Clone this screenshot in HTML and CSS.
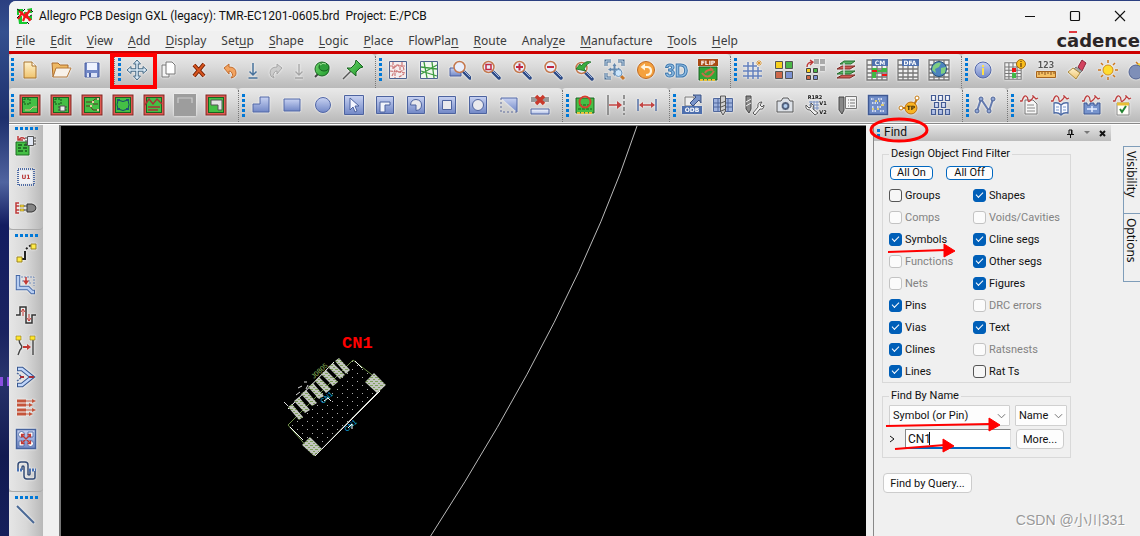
FILE: index.html
```html
<!DOCTYPE html>
<html lang="en">
<head>
<meta charset="utf-8">
<title>Allegro PCB Design GXL</title>
<link rel="stylesheet" href="styles.css">
</head>
<body>
<svg class="defs" aria-hidden="true">
  <defs>
    <linearGradient id="gb" x1="0" y1="0" x2="0" y2="1"><stop offset="0" stop-color="#c9d3f2"/><stop offset="1" stop-color="#7187c6"/></linearGradient>
    <linearGradient id="gl" x1="0" y1="0" x2="0" y2="1"><stop offset="0" stop-color="#fdfdff"/><stop offset="1" stop-color="#a9b9e4"/></linearGradient>
    <linearGradient id="gg" x1="0" y1="0" x2="1" y2="1"><stop offset="0" stop-color="#6fd76d"/><stop offset="1" stop-color="#1f9a2a"/></linearGradient>
    <linearGradient id="gy" x1="0" y1="0" x2="0" y2="1"><stop offset="0" stop-color="#fff3cf"/><stop offset="1" stop-color="#efc36d"/></linearGradient>
    <symbol id="tile" viewBox="0 0 22 22"><rect x="1" y="1" width="20" height="20" fill="#df5a52" stroke="#7c2420"/><rect x="3.500" y="3.500" width="15" height="15" fill="#45bf45" stroke="#1a6420"/></symbol>
    <symbol id="lens" viewBox="0 0 22 22"><path d="M13 13l6 6" stroke="#2c4a86" stroke-width="3.500" stroke-linecap="round"/><path d="M13 12l6 6" stroke="#a9b9dd" stroke-width="1"/><circle cx="8.500" cy="8" r="5.500" fill="#e9eefb" stroke="#c4774c" stroke-width="1.500"/></symbol>
    <symbol id="table" viewBox="0 0 22 22"><rect x="1" y="1" width="20" height="20" fill="#f2f2f2"/><path d="M1 1h20v20H1zM1 6h20M1 10h20M1 14h20M1 18h20M6 1v20M11 1v20M16 1v20" fill="none" stroke="#777" stroke-width="1.300"/></symbol>
    <symbol id="wave" viewBox="0 0 22 22"><path d="M1 7h2q2-6 4-5t2 4 3 0 2-4 3 3l2-1" fill="none" stroke="#bd3c3c" stroke-width="1.300"/></symbol>
  </defs>
</svg>
<div class="desktop">
<main class="window">
  <header class="titlebar">
    <svg class="app-icon" viewBox="0 0 18 18"><path d="M1 2h6v3H3v3H1zM2 9h4v6h5v2H3zM11 2l5-1v5h-3zM12 9h4v4h-3zM8 5h4v3H8z" fill="#17c92f"/><path d="M2 12l4-6 3 4 5-7M3 4l6 5 6 4M7 14l3-7 4 7" stroke="#f01818" stroke-width="2.200" fill="none"/><path d="M1 2l3 2M3 9l-2 2M7 4l2-2M11 15l2 2M15 3l2 2M14 9l2-1" stroke="#111" stroke-width="1"/></svg>
    <h1>Allegro PCB Design GXL (legacy): TMR-EC1201-0605.brd&nbsp; Project: E:/PCB</h1>
    <div class="winctl">
      <button aria-label="Minimize"><svg viewBox="0 0 12 12"><path d="M1 6.500h10" stroke="#111"/></svg></button>
      <button aria-label="Maximize"><svg viewBox="0 0 12 12"><rect x="1.500" y="1.500" width="9" height="9" rx="1" fill="none" stroke="#111" stroke-width="1.200"/></svg></button>
      <button aria-label="Close"><svg viewBox="0 0 12 12"><path d="M1 1l10 10M11 1L1 11" stroke="#111" stroke-width="1.100"/></svg></button>
    </div>
  </header>
  <nav class="menubar">
    <button><u>F</u>ile</button><button><u>E</u>dit</button><button><u>V</u>iew</button><button><u>A</u>dd</button><button><u>D</u>isplay</button><button>Set<u>u</u>p</button><button><u>S</u>hape</button><button><u>L</u>ogic</button><button><u>P</u>lace</button><button>FlowPla<u>n</u></button><button><u>R</u>oute</button><button>Analy<u>z</u>e</button><button><u>M</u>anufacture</button><button><u>T</u>ools</button><button><u>H</u>elp</button>
    <span class="brand">c<span class="macron">a</span>dence</span>
  </nav>

  <div class="toolrow">
    <div class="group first"><i class="grip"></i>
      <button aria-label="New"><svg viewBox="0 0 22 22"><path d="M5 3h8l4 4v12H5z" fill="url(#gy)" stroke="#a8722a"/><path d="M13 3v4h4" fill="#fff" stroke="#a8722a"/></svg></button>
      <button aria-label="Open"><svg viewBox="0 0 22 22"><path d="M2 4h6l2 2h8v4H6l-3 8z" fill="#efb964" stroke="#a8682a"/><path d="M3 18l3-9h15l-4 9z" fill="#f8f2ea" stroke="#b57a3c"/></svg></button>
      <button aria-label="Save"><svg viewBox="0 0 22 22"><path d="M4 4h14v14H4z" fill="#7187c6" stroke="#4b5fa0"/><path d="M6 4h10v7H6z" fill="#eef2ff"/><path d="M6 14h10v4H6z" fill="#dce3f7"/><path d="M8 14h2v4H8z" fill="#4b5fa0"/></svg></button>
    </div>
    <div class="group marked"><i class="grip"></i>
      <button aria-label="Move"><svg viewBox="0 0 22 22"><path d="M11 4v14M4 11h14" stroke="#446884" stroke-width="3.500"/><path d="M11 1l3.500 4h-7zM11 21l3.500-4h-7zM1 11l4-3.500v7zM21 11l-4-3.500v7z" fill="#dcecf8" stroke="#446884"/><path d="M11 4v14M4 11h14" stroke="#dcecf8" stroke-width="1.500"/></svg></button>
      <button aria-label="Copy"><svg viewBox="0 0 22 22"><path d="M5 6h7v12H5z" fill="#f4f4f4" stroke="#777"/><path d="M9 3h6l3 3v9H9z" fill="#fff" stroke="#777"/></svg></button>
      <button aria-label="Delete"><svg viewBox="0 0 22 22"><path d="M6 6l10 11M16 5L6 17" stroke="#702108" stroke-width="4"/><path d="M6 6l10 11M16 5L6 17" stroke="#d6531d" stroke-width="2"/></svg></button>
      <button aria-label="Undo"><svg viewBox="0 0 22 22"><path d="M5 9l5-4v3q7 0 7 6 0 4-5 5 3-3 1-5-1-2-3-2v3z" fill="#f2a461" stroke="#bf6a2d"/></svg></button>
      <button class="half" aria-label="Undo list"><svg viewBox="4 0 14 22"><path d="M11 4v12M7.500 12.500L11 16l3.500-3.500M6.500 19h9" fill="none" stroke="#47719b" stroke-width="1.500"/></svg></button>
      <button aria-label="Redo"><svg viewBox="0 0 22 22"><path d="M17 9l-5-4v3q-7 0-7 6 0 4 4 5-2-3 0-5 1-2 3-2v3z" fill="#ccc" stroke="#a4a4a4"/></svg></button>
      <button class="half" aria-label="Redo list"><svg viewBox="4 0 14 22"><path d="M11 5v11M7.500 12.500L11 16l3.500-3.500M7 19h8" fill="none" stroke="#a4a4a4" stroke-width="1.300"/></svg></button>
      <button aria-label="Unpin"><svg viewBox="0 0 22 22"><path d="M4 18l4-4" stroke="#444" stroke-width="2"/><circle cx="11" cy="10" r="7" fill="url(#gg)" stroke="#17601f"/><ellipse cx="13" cy="8" rx="5" ry="4" fill="#2f9f3b" stroke="#17601f"/><path d="M9 6q3-3 6-1" stroke="#a8e8a0" fill="none"/></svg></button>
      <button aria-label="Pin"><svg viewBox="0 0 22 22"><path d="M1 20l8-8" stroke="#555" stroke-width="1.500"/><path d="M14 1l7 7-3 1-4 4v4L5 9h4l4-4z" fill="url(#gg)" stroke="#17601f"/></svg></button>
      <svg class="mark" aria-hidden="true"><rect x="2" y="2" width="43" height="32" fill="none" stroke="#f00" stroke-width="4"/></svg>
    </div>
    <div class="group"><i class="grip"></i>
      <button aria-label="Unrats all"><svg viewBox="0 0 22 22"><path d="M2.500 2.500h17v17h-17z" fill="#f5eeee" stroke="#4c6290"/><path d="M3 7h16M3 12l16 2M5 17l3-6 4 2 5-2M6 3v7l4-4 6 1 1 4M13 8v5M12 18l5-3M15 3v5M8 14v5" fill="none" stroke="#c77" stroke-width="1.200" stroke-dasharray="3 1"/></svg></button>
      <button aria-label="Rats all"><svg viewBox="0 0 22 22"><path d="M2.500 2.500h17v17h-17z" fill="#f1f8ef" stroke="#4c6290"/><path d="M6 3l3 16M14 3l2 16M3 8l16 2M3 15l16-9M3 12l16 5" fill="none" stroke="#3c9b40" stroke-width="1.300"/></svg></button>
      <button aria-label="Zoom points"><svg viewBox="0 0 22 22"><path d="M1 9h11v8H1z" fill="url(#gb)" stroke="#4b5fa0"/><use href="#lens" x="2"/></svg></button>
      <button aria-label="Zoom fit"><svg viewBox="0 0 22 22"><use href="#lens"/><path d="M6 5.500h5v5H6z" fill="none" stroke="#c22740" stroke-width="1.500"/></svg></button>
      <button aria-label="Zoom in"><svg viewBox="0 0 22 22"><use href="#lens"/><path d="M5 8h7M8.500 4.500v7" stroke="#c22740" stroke-width="2"/></svg></button>
      <button aria-label="Zoom out"><svg viewBox="0 0 22 22"><use href="#lens"/><path d="M5 8h7" stroke="#c22740" stroke-width="2"/></svg></button>
      <button aria-label="Zoom previous"><svg viewBox="0 0 22 22"><use href="#lens" y="1"/><path d="M3 10l4-5 1 2q5-6 10-4-4 1-7 7l2 2z" fill="#39ad3e" stroke="#1b6d24" stroke-width=".8"/></svg></button>
      <button aria-label="Zoom world"><svg viewBox="0 0 22 22"><path d="M2 7V2h5M14 2h5v5M2 14v5h5" fill="none" stroke="#476a90" stroke-width="3"/><path d="M2 7V2h5M14 2h5v5M2 14v5h5" fill="none" stroke="#cfe3f4" stroke-width="1"/><path d="M10.500 4l2 3h-4zM10.500 17l2-3h-4zM4 10.500l3-2v4zM17 10.500l-3-2v4zM9.500 7h2v7h-2zM7 9.500h7v2H7z" fill="#6488ae"/><path d="M17 17l3 3" stroke="#c7762b" stroke-width="3"/><circle cx="14.500" cy="14" r="3.500" fill="#cbe5fb" stroke="#6a95be"/></svg></button>
      <button aria-label="Refresh"><svg viewBox="0 0 22 22"><circle cx="11" cy="11" r="8.500" fill="#f5a13d" stroke="#bd6a25"/><path d="M7 8h5q4 0 4 4t-5 4" fill="none" stroke="#fff4dd" stroke-width="2.200"/><path d="M10 4.500v7L5.500 8z" fill="#fff4dd"/></svg></button>
      <button aria-label="3D"><svg viewBox="0 0 24 22" class="wide"><text x="0" y="18" class="t3d">3D</text></svg></button>
      <button aria-label="Flip"><svg viewBox="0 0 22 24" class="tall"><path d="M1 1h20v7H1z" fill="#a94a14"/><text x="11" y="7" class="tiny light">FLIP</text><path d="M2 9h18v13H2z" fill="#2fa737" stroke="#1b5f20"/><path d="M3 22h16" stroke="#e9c13a" stroke-width="2" stroke-dasharray="3 1"/><path d="M5 15q6 8 12-2M8 15q2-4 8-3l-3-2" fill="none" stroke="#c86e48" stroke-width="2"/></svg></button>
    </div>
    <div class="group"><i class="grip"></i>
      <button aria-label="Grid"><svg viewBox="0 0 22 22"><path d="M6 3v17M11 3v17M16 8v12M1 7h14M1 12h19M1 17h19" stroke="#6380bd" stroke-width="1.500"/><path d="M17 1v6M14 4h6M15 2l4 4M19 2l-4 4" stroke="#d68b1e" stroke-width=".8"/></svg></button>
      <button aria-label="Color"><svg viewBox="0 0 22 22"><g stroke="#555"><path d="M2.500 2.500h7v7h-7z" fill="#f6cf1c"/><path d="M12.500 2.500h7v7h-7z" fill="#4cb648"/><path d="M2.500 12.500h7v7h-7z" fill="#cd6849"/><path d="M12.500 12.500h7v7h-7z" fill="#7c93d2"/></g></svg></button>
      <button aria-label="Shadow toggle"><svg viewBox="0 0 22 22"><path d="M10 0h5v5h-5zM16 0h5v5h-5zM16 7h5v5h-5z" fill="#aaa"/><path d="M3 8q0-5 6-5M6 1l3 2-3 3" stroke="#bd3838" fill="none" stroke-width="1.400"/><g stroke="#444"><path d="M2.500 9.500h4v4h-4z" fill="#f6cf1c"/><path d="M9.500 9.500h4v4h-4z" fill="#4cb648"/><path d="M2.500 16.500h4v4h-4z" fill="#cd6849"/><path d="M9.500 16.500h4v4h-4z" fill="#7c93d2"/></g></svg></button>
      <button aria-label="Cross section"><svg viewBox="0 0 22 22"><path d="M2 19l5-3h13l-5 3z" fill="#cf5b55" stroke="#7b2a25"/><path d="M2 15l5-3h13l-5 3z" fill="#58b263" stroke="#236b2c"/><path d="M2 10l5-3h13l-5 3z" fill="#cf5b55" stroke="#7b2a25"/><path d="M5 5l4-3h11l-4 3z" fill="#58b263" stroke="#236b2c"/><path d="M9 4v12" stroke="#ddd" stroke-width="1.500"/></svg></button>
      <button aria-label="Constraint manager"><svg viewBox="0 0 22 22"><use href="#table"/><path d="M6 9h5v2H6zM11 11h5v2h-5zM6 13h4v6H6zM16 9h5v4h-5z" fill="#40b846"/><path d="M6 11h5v2H6zM16 15h5v2h-5z" fill="#f01414"/><path d="M6 0h16v7H6z" fill="#4e70ae"/><text x="14" y="6" class="tiny light">CM</text></svg></button>
      <button aria-label="DFA"><svg viewBox="0 0 22 22"><use href="#table"/><path d="M5 0h17v7H5z" fill="#4e70ae"/><text x="13" y="6" class="tiny light">DFA</text></svg></button>
      <button aria-label="Web"><svg viewBox="0 0 22 22"><use href="#table"/><circle cx="11" cy="10" r="7.500" fill="#4c83bd" stroke="#24517a"/><path d="M5 7q4-5 8-3l-2 4-4 2 1 4-4-3zM13 9l5-1-1 6-4 1z" fill="#7fcf80"/></svg></button>
    </div>
    <div class="group last"><i class="grip"></i>
      <button aria-label="Show element"><svg viewBox="0 0 22 22"><circle cx="10" cy="11" r="8" fill="url(#gb)" stroke="#5267a8"/><path d="M9 6h2v2H9zM9 9h2v7H9z" fill="#ffe14a"/></svg></button>
      <button aria-label="Cross reference"><svg viewBox="0 0 22 22"><use href="#table" y="2" width="18" height="20"/><path d="M8 9h4v4H8z" fill="#f01414"/><path d="M8 14h4v5H8z" fill="#40b846"/><circle cx="17" cy="5" r="4.500" fill="#f8bd1b" stroke="#9f6810"/><path d="M17 2v1M17 4v4" stroke="#70440a" stroke-width="1.300"/></svg></button>
      <button aria-label="Measure"><svg viewBox="0 0 22 22"><text x="11" y="9" class="digits">123</text><path d="M1.500 12.500h19v6h-19z" fill="#f4c064" stroke="#a6631c"/><path d="M4 13v3M7 13v2M10 13v3M13 13v2M16 13v3M19 13v2" stroke="#87501c"/></svg></button>
      <button aria-label="Highlight"><svg viewBox="0 0 22 22"><path d="M12 8l4-7 4 3-4 8z" fill="#d34360" stroke="#8b2439"/><path d="M10 8l6 4-2 2-6-4z" fill="#aaa" stroke="#777"/><path d="M7 9l7 5-4 6-8-7z" fill="url(#gy)" stroke="#a9893c"/></svg></button>
      <button aria-label="Dehighlight"><svg viewBox="0 0 22 22"><path d="M11 1v3M11 18v3M1 11h3M18 11h3M4 4l2 2M16 16l2 2M18 4l-2 2M6 16l-2 2" stroke="#cd761d" stroke-width="1.500"/><circle cx="11" cy="11" r="5" fill="#ffdc2e" stroke="#cd891d"/></svg></button>
      <button aria-label="Shadow mode"><svg viewBox="0 0 22 22"><path d="M14 1v4M8 3l3 3M20 5l-3 3" stroke="#cd761d" stroke-width="1.500"/><circle cx="13" cy="9" r="5" fill="#ffdc2e"/><circle cx="8" cy="13" r="7" fill="#7e8fb8" stroke="#4f608f"/></svg></button>
    </div>
  </div>

  <div class="toolrow">
    <div class="group first"><i class="grip"></i>
      <button aria-label="General edit"><svg viewBox="0 0 22 22"><use href="#tile"/><path d="M5 5h6v5H5z" fill="none" stroke="#174f1b" stroke-dasharray="2 1"/><path d="M6 16h5l3-3h4" stroke="#efb08b" fill="none"/></svg></button>
      <button aria-label="Placement edit"><svg viewBox="0 0 22 22"><use href="#tile"/><path d="M5 5h6v5H5z" fill="none" stroke="#174f1b" stroke-dasharray="2 1"/><path d="M10 12h5v5h-5z" fill="#eee" stroke="#555"/><path d="M8 13h2M8 16h2M15 13h2M15 16h2" stroke="#444"/></svg></button>
      <button aria-label="Etch edit"><svg viewBox="0 0 22 22"><use href="#tile"/><path d="M5 8h6l3-3h3M5 12h4l3 4h5M12 10h5" stroke="#5f3624" fill="none"/><path d="M11 8h2M9 12h2M16 5h2M16 16h2" stroke="#f2c5a4" stroke-width="2"/></svg></button>
      <button aria-label="Flow planning"><svg viewBox="0 0 22 22"><use href="#tile"/><path d="M6 6q5 3 10 0M6 15q5 3 10 0M6 6q-2 5 0 9M16 6q2 5 0 9" fill="none" stroke="#164b68"/><path d="M5 5h3v2H5zM14 5h3v2h-3zM5 14h3v2H5zM14 14h3v2h-3z" fill="#225274"/></svg></button>
      <button aria-label="Signal integrity"><svg viewBox="0 0 22 22"><use href="#tile"/><path d="M2 11l4-6 4 5 4-5 5 5M5 13h12M5 16h10" stroke="#aa3038" fill="none" stroke-width="1.400"/></svg></button>
      <button disabled aria-label="RF edit"><svg viewBox="0 0 22 22"><path d="M0 0h22v22H0z" fill="#9d9d9d"/><path d="M4 9V4h14v5" fill="none" stroke="#ccc" stroke-width="1.200"/></svg></button>
      <button aria-label="Shape edit"><svg viewBox="0 0 22 22"><use href="#tile"/><path d="M6 6h11v10h-4v-5H6z" fill="#e4e4e4" stroke="#555"/></svg></button>
    </div>
    <div class="group"><i class="grip"></i>
      <button aria-label="Polygon"><svg viewBox="0 0 22 22"><path d="M3 10h7V3h9v15H3z" fill="url(#gb)" stroke="#5166a5"/></svg></button>
      <button aria-label="Rectangle"><svg viewBox="0 0 22 22"><path d="M3 5h16v12H3z" fill="url(#gb)" stroke="#5166a5"/></svg></button>
      <button aria-label="Circle"><svg viewBox="0 0 22 22"><circle cx="11" cy="11" r="7.500" fill="url(#gb)" stroke="#5166a5"/></svg></button>
      <button aria-label="Select shape"><svg viewBox="0 0 22 22"><path d="M1.500 1.500h19v19h-19z" fill="url(#gb)" stroke="#4d639f"/><path d="M7 4v12l3-3 2 5 2-1-2-5h4z" fill="#f4f6ff" stroke="#4d639f"/></svg></button>
      <button aria-label="Void polygon"><svg viewBox="0 0 22 22"><path d="M2.500 2.500h17v17h-17z" fill="url(#gb)" stroke="#4d639f"/><path d="M6 8h10v3h-5v7H6z" fill="#f2f4fb" stroke="#4d639f"/></svg></button>
      <button aria-label="Void shape"><svg viewBox="0 0 22 22"><path d="M2.500 2.500h17v17h-17z" fill="url(#gb)" stroke="#4d639f"/><path d="M11 11H5.500Q6 5.500 11 5.500q5.500.5 5.500 5.500T11 16.500z" fill="#e9e9ed" stroke="#4d639f"/></svg></button>
      <button aria-label="Void rectangle"><svg viewBox="0 0 22 22"><path d="M2.500 2.500h17v17h-17z" fill="url(#gb)" stroke="#4d639f"/><path d="M6.500 6.500h9v9h-9z" fill="#e9e9ed" stroke="#4d639f"/></svg></button>
      <button aria-label="Void circle"><svg viewBox="0 0 22 22"><path d="M2.500 2.500h17v17h-17z" fill="url(#gb)" stroke="#4d639f"/><circle cx="11" cy="11" r="5.500" fill="#e9e9ed" stroke="#4d639f"/></svg></button>
      <button aria-label="Edit boundary"><svg viewBox="0 0 22 22"><path d="M3 4h16v14z" fill="url(#gb)"/><path d="M3 4v14h16" fill="none" stroke="#5a6999" stroke-dasharray="2 2"/><path d="M3 4h16v14" fill="none" stroke="#5166a5"/></svg></button>
      <button aria-label="Delete islands"><svg viewBox="0 0 22 22"><path d="M2 3h18v5H2z" fill="#999"/><path d="M2 15h18v5H2z" fill="url(#gl)" stroke="#4d639f"/><path d="M7 2l8 8M15 2L7 10" stroke="#c93a2c" stroke-width="3.500"/></svg></button>
    </div>
    <div class="group"><i class="grip"></i>
      <button aria-label="Design review"><svg viewBox="0 0 22 22"><path d="M2 4h18v15H2z" fill="#45bf45" stroke="#1b5f20"/><path d="M4 15h14M5 11h12" stroke="#175e1c" stroke-width="1" stroke-dasharray="3 1"/><path d="M3 19h16" stroke="#eac440" stroke-width="2" stroke-dasharray="3 1"/><circle cx="11" cy="8" r="5.500" fill="none" stroke="#d83e2f" stroke-width="2"/></svg></button>
      <button aria-label="Dimension edge"><svg viewBox="0 0 22 22"><path d="M3 1v20" stroke="#777" stroke-width="1.500"/><path d="M19 1v20" stroke="#777" stroke-width="1.500" stroke-dasharray="4 2"/><path d="M4 11h9" stroke="#c34442" stroke-width="1.500"/><path d="M12 7l5 4-5 4z" fill="#c34442"/></svg></button>
      <button aria-label="Dimension"><svg viewBox="0 0 22 22"><path d="M2 5v12M20 5v12" stroke="#5470a5" stroke-width="1.500"/><path d="M4 11h14" stroke="#c34442" stroke-width="1.500"/><path d="M3 11l4-3v6zM19 11l-4-3v6z" fill="#c34442"/></svg></button>
    </div>
    <div class="group"><i class="grip"></i>
      <button aria-label="ODB export"><svg viewBox="0 0 22 22"><path d="M4 3h9v9H4z" fill="#eee" stroke="#777"/><path d="M9 9l6-6-3-2h8v8l-2-3-6 6z" fill="#7893c9" stroke="#395081"/><path d="M1 12h20v8H1z" fill="#4d6fae"/><text x="11" y="18" class="tiny light">ODB</text></svg></button>
      <button aria-label="Drill table"><svg viewBox="0 0 22 22"><path d="M1.500 4.500h19v13h-19zM1 9h20M1 13h20M6 4v14M16 4v14" fill="#9eb2dd" stroke="#4f679c"/><path d="M8.500 2h5v15l-2.500 4-2.500-4z" fill="#d0d0d0" stroke="#555"/><path d="M9 9l5-2M9 13l5-2M9 17l5-2" stroke="#555"/></svg></button>
      <button aria-label="Drill customize"><svg viewBox="0 0 22 22"><path d="M3 2h5v13l-2 4-3-4z" fill="#888" stroke="#444"/><path d="M3 8l5-3M3 12l5-3" stroke="#eee"/><path d="M10 19l5-6q-1-5 4-5l-2 3 2 2 2-2q0 5-4 4l-5 6z" fill="#f0f0f0" stroke="#555"/></svg></button>
      <button aria-label="Artwork"><svg viewBox="0 0 22 22"><path d="M3 7h4l2-3h5l2 3h3v11H3z" fill="#dce1e8" stroke="#555"/><circle cx="11.500" cy="12" r="4.500" fill="#51617d" stroke="#eee"/><circle cx="11.500" cy="12" r="2" fill="#b1cced"/></svg></button>
      <button aria-label="Auto rename"><svg viewBox="0 0 22 22"><path d="M6 7v9M9 7v9M12 7v9M4 8h10M4 11h10M4 14h10" stroke="#7990c0"/><path d="M10 21l-5-5q-5 0-4-5l3 3 2-1V9q4 2 2 6l5 4z" fill="#eee" stroke="#555"/><text x="10" y="5" class="micro">R1R2</text><text x="18" y="11" class="micro">V1</text><text x="18" y="20" class="micro">V2</text></svg></button>
      <button aria-label="Drill legend"><svg viewBox="0 0 22 22"><path d="M3 3h5v13l-2 4-3-4z" fill="#888" stroke="#444"/><path d="M9.500 2.500h11v12h-11z" fill="#f4f4f4" stroke="#777"/><path d="M12 6h7M12 9h7M12 12h7" stroke="#777" stroke-dasharray="1 1 5 0"/></svg></button>
      <button aria-label="Testprep"><svg viewBox="0 0 22 22"><path d="M1.500 1.500h19v19h-19z" fill="#6f8cc8" stroke="#3f5993" stroke-width="1.500"/><path d="M4 5h3M11 5h5M5 9h6M15 9h3M5 13h2M10 13h5M5 17h4M13 17h4" stroke="#eef2ff" stroke-width="1.500" stroke-dasharray="1.500 1"/><path d="M8 7h2M14 11h3M5 15h2M12 7h1M10 15h2" stroke="#ffdf5c" stroke-width="1.500"/></svg></button>
      <button aria-label="Test point"><svg viewBox="0 0 22 22"><path d="M2 14h6M16 11l3-6" stroke="#c37912" stroke-width="2"/><circle cx="3" cy="14" r="2" fill="#fff" stroke="#c37912"/><circle cx="19" cy="4" r="2" fill="#fff" stroke="#c37912"/><circle cx="13" cy="14" r="6" fill="#f9b422" stroke="#b76b12"/><text x="13" y="16" class="tiny">TP</text></svg></button>
      <button aria-label="Panelize"><svg viewBox="0 0 22 22"><path d="M2.500 1.500h4v5h-4zM9.500 1.500h4v5h-4zM16.500 1.500h4v5h-4zM5.500 8.500h4v5h-4zM12.500 8.500h4v5h-4zM2.500 15.500h4v5h-4zM9.500 15.500h4v5h-4zM16.500 15.500h4v5h-4z" fill="url(#gl)" stroke="#435b93" stroke-width="1.200"/></svg></button>
    </div>
    <div class="group"><i class="grip"></i>
      <button aria-label="Net schedule"><svg viewBox="0 0 22 22"><path d="M3 17L7 5l8 12 4-12" fill="none" stroke="#647aae" stroke-width="2"/><g fill="#92a7d4" stroke="#4e6497"><circle cx="3" cy="17" r="2"/><circle cx="7" cy="5" r="2"/><circle cx="15" cy="17" r="2"/><circle cx="19" cy="5" r="2"/></g></svg></button>
    </div>
    <div class="group last"><i class="grip"></i>
      <button aria-label="Report"><svg viewBox="0 0 22 22"><path d="M6 6h8l4 4v10H6z" fill="#f7f7f7" stroke="#777"/><path d="M8 11h7M8 14h8M8 17h8" stroke="#888"/><use href="#wave"/></svg></button>
      <button aria-label="Library"><svg viewBox="0 0 22 22"><path d="M4 9q4-1 7 2 3-3 7-2v10q-4-1-7 2-3-3-7-2zM11 11v10" fill="#f7f9ff" stroke="#4f6ca5" stroke-width="1.300"/><path d="M6 13h3M6 16h3M13 13h3M13 16h3" stroke="#7795ca"/><use href="#wave"/></svg></button>
      <button aria-label="Model assign"><svg viewBox="0 0 22 22"><path d="M3 9h3v2h3V9h4v2h3V9h3v11H3z" fill="#7794cd" stroke="#3d5791"/><path d="M6 15h10M11 12v6" stroke="#e4ecff" stroke-width="1.500"/><use href="#wave"/></svg></button>
      <button aria-label="Audit"><svg viewBox="0 0 22 22"><path d="M5 9h12v12H5z" fill="#fffef8" stroke="#888"/><path d="M5 10h12" stroke="#e8bf35" stroke-width="3"/><path d="M8 15l2 3 4-6" fill="none" stroke="#238332" stroke-width="2"/><use href="#wave"/></svg></button>
    </div>
  </div>

  <div class="workspace">
    <aside class="sidebar">
      <div class="vgroup"><i class="grip"></i>
        <button aria-label="Place manual"><svg viewBox="0 0 22 22"><path d="M1 7h13v13H1z" fill="#45bf45" stroke="#1c6c23"/><path d="M3 10h4M9 10h3M3 13h3M8 13h4M3 16h5M10 16h2" stroke="#185b1e" stroke-width="1.300"/><path d="M10 4q-4-3-6 1M3 1v4h5" stroke="#bd3838" stroke-width="1.500" fill="none"/><path d="M10 3h11M10 6h11M10 9h11" stroke="#444"/><path d="M12.500 1.500h6v9h-6z" fill="#e2e8f5" stroke="#555"/></svg></button>
        <button aria-label="Place component"><svg viewBox="0 0 22 22"><path d="M3 3h16v16H3z" fill="none" stroke="#4f6ca5" stroke-width="2" stroke-dasharray="1 1"/><path d="M5 5h12v12H5z" fill="#eef0f4"/><text x="11" y="13" class="tiny red">U1</text></svg></button>
        <button aria-label="Swap"><svg viewBox="0 0 22 22"><path d="M4 6H1v10h3M1 9h3M1 13h3" stroke="#bd3838" fill="none" stroke-width="1.500"/><path d="M5 8h4v2H5zM5 12h4v2H5z" fill="#ffe03a" stroke="#86711c" stroke-width=".6"/><path d="M9 9h3M9 13h3" stroke="#444"/><path d="M12 7h5q4 1 4 4t-4 4h-5z" fill="#858585" stroke="#333"/></svg></button>
      </div>
      <div class="vgroup"><i class="grip"></i>
        <button aria-label="Add connect"><svg viewBox="0 0 22 22"><path d="M6 17h4V9" fill="none" stroke="#222" stroke-width="2"/><path d="M11 7l5-4" stroke="#222" stroke-width="2" stroke-dasharray="2 2"/><path d="M2 15h5v5H2zM16 2h5v5h-5z" fill="#ffec48" stroke="#9a8320"/></svg></button>
        <button aria-label="Slide"><svg viewBox="0 0 22 22"><path d="M3 2v13h10l4 4h3" stroke="#4467a5" stroke-width="4.500" fill="none"/><path d="M3 3v12h10l4 4h2" stroke="#b8cef1" stroke-width="2.500" fill="none"/><path d="M6 4h13v9M7 8h8v4" fill="none" stroke="#6f89b8" stroke-dasharray="2 1"/><path d="M11 4v6" stroke="#c23934" stroke-width="1.500"/><path d="M8 7.500h6L11 12z" fill="#c23934"/></svg></button>
        <button aria-label="Delay tune"><svg viewBox="0 0 22 22"><path d="M1 11h4V3h6v16h6v-8h4" fill="none" stroke="#333" stroke-width="1.500"/><path d="M8 12V5M6 8l2-3 2 3M14 10v7M12 14l2 3 2-3" stroke="#c23934" fill="none"/></svg></button>
        <button aria-label="Custom smooth"><svg viewBox="0 0 22 22"><path d="M4 4q0 4 2 6t-1 5l-2 5M18 5v15" fill="none" stroke="#444" stroke-width="1.400"/><path d="M8 12h5" stroke="#c23934" stroke-width="2"/><path d="M12 9l4 3-4 3z" fill="#c23934"/><path d="M1 1h5v4H1zM15 1h5v4h-5z" fill="#ffe62a" stroke="#9a8320" stroke-width=".7"/></svg></button>
        <button aria-label="Fan in"><svg viewBox="0 0 22 22"><path d="M2 3h5l10 8-10 8H2" fill="none" stroke="#37568e" stroke-width="4.500"/><path d="M3 3h4l10 8-10 8H3" fill="none" stroke="#bfd5fa" stroke-width="2.300"/><path d="M2 7l4 3M2 15l4-3" stroke="#4b679c" stroke-width="1.500" fill="none" stroke-dasharray="2 1"/><path d="M5 10h4v2H5zM14 10h5v2h-5z" fill="#a72f38"/></svg></button>
        <button aria-label="Spread"><svg viewBox="0 0 22 22"><path d="M2 4h9M2 8h9M2 13h9M2 17h9" stroke="#c4543b" stroke-width="3"/><path d="M11 4h8M11 8h5M11 13h8M11 17h5" stroke="#c4543b"/><path d="M17 2l4 2-4 2zM14 6l4 2-4 2zM17 11l4 2-4 2zM14 15l4 2-4 2z" fill="#c4543b"/></svg></button>
        <button aria-label="Auto route"><svg viewBox="0 0 22 22"><path d="M1.500 1.500h19v19h-19z" fill="url(#gb)" stroke="#46639e" stroke-width="1.500"/><circle cx="6.500" cy="6.500" r="3" fill="#fff" stroke="#5875ae"/><path d="M13 4h5v5h-5zM4 13h5v5H4z" fill="#fff" stroke="#5875ae"/><circle cx="15.500" cy="15.500" r="3" fill="#fff" stroke="#5875ae"/><path d="M7 7l8 8M15 7l-8 8M6.500 9.500v-3h3M12.500 6.500h3v3M6.500 12.500v3h3M12.500 15.500h3v-3" stroke="#c23934" fill="none" stroke-width="1.300"/></svg></button>
        <button aria-label="Phase tune"><svg viewBox="0 0 22 22"><path d="M3 11V6q0-3 3-3h4q3 0 3 3v10M7 11V8q0-1 1-1t1 1v9q0 3 3 3h6q2 0 2-2v-6M13 15q0 1 1 1t1-1v-4" fill="none" stroke="#334b76" stroke-width="1.500"/><path d="M2 11h6M14 11h7" stroke="#4670b5" stroke-width="3" stroke-dasharray="2 1"/></svg></button>
      </div>
      <div class="vgroup"><i class="grip"></i>
        <button aria-label="Add line"><svg viewBox="0 0 22 22"><path d="M2 2l17 17" stroke="#496895" stroke-width="2"/></svg></button>
      </div>
    </aside>

    <section class="canvas" aria-label="Board">
      <svg class="board">
        <g transform="translate(-61 -126)">
          <path d="M637 126Q575 313 430 537" fill="none" stroke="#b9b9b9"/>
          <defs>
            <pattern id="dots" width="10" height="8" patternUnits="userSpaceOnUse"><path d="M2 1h1v1H2zM7 5h1v1H7z" fill="#b0b0b0"/></pattern>
            <pattern id="pad" width="5" height="4" patternUnits="userSpaceOnUse"><path d="M0 0h5v4H0z" fill="#c3c6c0"/><path d="M0 1.500h3M3 3.500h2" stroke="#7fa05a"/></pattern>
          </defs>
          <path d="M353 360L385 385 315 456 288 425z" fill="url(#dots)" stroke="#6f8f4a"/>
          <path d="M288 409L334 362M290 427l13 13M355 361l7 7M322 449L380 391" stroke="#fff" fill="none"/>
          <path d="M315 456L385 385" stroke="#e8e8e8"/>
          <g fill="url(#pad)">
            <path d="M302 445l8-8 12 12-8 7zM365 382l9-9 12 12-9 8z"/>
            <path d="M288 407l4-3 11 13-4 3zM294 401l5-4 11 13-5 3zM301 394l5-4 11 13-5 3zM308 387l5-4 11 13-5 3zM315 381l4-4 12 12-5 4zM321 374l5-4 12 12-5 4zM328 367l5-4 12 12-5 4zM335 361l4-3 11 12-4 4z"/>
          </g>
          <path d="M284 402l4 4M296 395l4-3M298 388l4-2M304 382h3M306 389l2-4" stroke="#dcdcdc"/>
          <text class="silk" transform="translate(314 379) rotate(-42)" fill="#8fb85c">J0805</text>
          <text class="silk" transform="translate(323 404) rotate(-42)" fill="#12a5da">CN1</text>
          <text class="silk" transform="translate(347 432) rotate(-42)" fill="#12a5da">CN1</text>
          <path d="M324 401l4-3 3 3M348 428l4-4v5" stroke="#fff" fill="none"/>
          <text class="callout" x="342" y="348">CN1</text>
        </g>
      </svg>
    </section>

    <section class="dock">
      <header class="dock-title"><i class="grip"></i><h2>Find</h2>
        <button aria-label="Pin panel"><svg viewBox="0 0 9 9"><path d="M3 5V1h3v4M1 5.500h7M4.500 5v4M5.500 1v4" fill="none" stroke="#111"/></svg></button>
        <button aria-label="Panel menu"><svg viewBox="0 0 9 9"><path d="M2 2h6L5 5z" fill="#777"/></svg></button>
        <button aria-label="Close panel"><svg viewBox="0 0 9 9"><path d="M2 2l5 5M7 2L2 7" stroke="#111" stroke-width="2"/></svg></button>
      </header>
      <div class="dock-body">
        <form class="finder">
          <fieldset class="filter"><legend>Design Object Find Filter</legend>
            <div class="all"><button type="button">All On</button><button type="button">All Off</button></div>
            <div class="checks">
              <label><input type="checkbox">Groups</label><label><input type="checkbox" checked>Shapes</label>
              <label class="off"><input type="checkbox" disabled>Comps</label><label class="off"><input type="checkbox" disabled>Voids/Cavities</label>
              <label><input type="checkbox" checked>Symbols</label><label><input type="checkbox" checked>Cline segs</label>
              <label class="off"><input type="checkbox" disabled>Functions</label><label><input type="checkbox" checked>Other segs</label>
              <label class="off"><input type="checkbox" disabled>Nets</label><label><input type="checkbox" checked>Figures</label>
              <label><input type="checkbox" checked>Pins</label><label class="off"><input type="checkbox" disabled>DRC errors</label>
              <label><input type="checkbox" checked>Vias</label><label><input type="checkbox" checked>Text</label>
              <label><input type="checkbox" checked>Clines</label><label class="off"><input type="checkbox" disabled>Ratsnests</label>
              <label><input type="checkbox" checked>Lines</label><label><input type="checkbox">Rat Ts</label>
            </div>
          </fieldset>
          <fieldset class="byname"><legend>Find By Name</legend>
            <div class="line">
              <span class="pick grow"><select aria-label="Object type"><option>Symbol (or Pin)</option></select><svg viewBox="0 0 10 6"><path d="M1 1l4 4 4-4" fill="none" stroke="#666"/></svg></span>
              <span class="pick"><select aria-label="Match by"><option>Name</option></select><svg viewBox="0 0 10 6"><path d="M1 1l4 4 4-4" fill="none" stroke="#666"/></svg></span>
            </div>
            <div class="line second">
              <button type="button" class="expand" aria-label="Expand"><svg viewBox="0 0 6 8"><path d="M1 1l4 3-4 3" fill="none" stroke="#111"/></svg></button>
              <input type="text" value="CN1" aria-label="Name to find">
              <button type="button" class="btn">More...</button>
            </div>
          </fieldset>
          <button type="button" class="btn query">Find by Query...</button>
        </form>
        <div class="tabs"><button>Visibility</button><button>Options</button></div>
      </div>
      <svg class="notes" aria-hidden="true">
        <g transform="translate(-873 -124)" fill="#f00" stroke="#f00">
          <ellipse cx="898" cy="129" rx="28" ry="11" fill="none" stroke-width="3"/>
          <path d="M887 251l58-2M885 425l104-2M894 448l50-4" stroke-width="2"/>
          <path d="M943 243l11 7-11 6zM988 417l11 7-11 6zM942 438l11 7-11 6z" stroke-width="1"/>
          <path d="M928.500 431v13" stroke="#111"/>
        </g>
      </svg>
    </section>
  </div>
  <p class="credit">CSDN @小川331</p>
</main>
</div>
</body>
</html>
```
FILE: styles.css
```css
* { box-sizing: border-box; }
body { margin: 0; font-family: "Noto Sans", "Open Sans", sans-serif; font-size: 12px; color: #111; }
button { border: 0; background: none; padding: 0; margin: 0; font: inherit; color: inherit; }
h1, h2, p { margin: 0; font-weight: 400; }
.defs { position: absolute; width: 0; height: 0; }

.desktop {
  min-height: 100vh; padding: 1px 0 0 9px; display: flex;
  background:
    linear-gradient(#8a4fe0, #8a4fe0) 0 377px / 3px 9px no-repeat,
    linear-gradient(#8a4fe0, #8a4fe0) 7px 377px / 2px 9px no-repeat,
    linear-gradient(#2b3f80, #34508f 6%, #1d2f6c 22%, #5064a0 34%, #131c60 42%, #1a2360 62%, #28346c 70%, #121a50 85%, #16205c);
}
.window { flex: 1; min-width: 0; display: flex; flex-direction: column; background: #f0f0f0; border-radius: 7px 0 0 0; overflow: hidden; position: relative; }

.titlebar { display: flex; align-items: center; height: 30px; background: #f3f3f3; padding-left: 7px; flex: none; }
.app-icon { width: 18px; height: 18px; margin-right: 5px; }
.titlebar h1 { font: 12px "Roboto", sans-serif; flex: 1; white-space: nowrap; }
.winctl { display: flex; margin-right: -2px; }
.winctl button { width: 45px; height: 28px; display: grid; place-items: center; }
.winctl svg { width: 12px; height: 12px; }

.menubar { display: flex; align-items: center; height: 20px; gap: 15px; padding-left: 7px; color: #3c3c3c; flex: none; }
.menubar button { white-space: nowrap; line-height: 20px; }
.menubar u { text-underline-offset: 2px; }
.brand { margin-left: auto; font: bold 18px/20px "DejaVu Sans", sans-serif; color: #2b2526; }
.macron { position: relative; }
.macron::before { content: ""; position: absolute; left: 2px; top: 1px; width: 8px; height: 2px; background: #e0393e; }

.toolrow { display: flex; height: 34px; background: #c4c4c4; flex: none; }
.menubar + .toolrow { border-top: 3px solid #cc0000; height: 37px; }
.menubar + .toolrow .group { padding-bottom: 3px; }
.group {
  display: flex; align-items: center; flex: none; position: relative;
  padding: 0 7px 0 4px; background: linear-gradient(#e9e9e9, #d9d9d9 40%, #b9b9b9);
  border-radius: 4px 4px 0 0;
}
.group.first { padding-left: 2px; }
.group.last { flex: 1 0 auto; }
.group:not(.first)::before { content: ""; position: absolute; left: 0; top: 2px; bottom: 0; border-left: 1px dotted #777; }
.grip { width: 3px; height: 23px; background: repeating-linear-gradient(#0078d7 0 3px, transparent 3px 5px); flex: none; }
.group button { width: 31px; height: 31px; display: grid; place-items: center; flex: none; }
.group button.half { width: 15px; }
.group button svg, .vgroup button svg { width: 22px; height: 22px; filter: drop-shadow(0 0 1px #fff); }
.group .half svg { width: 14px; }
.group button .wide { width: 24px; }
.group button .tall { height: 24px; }
.mark { position: absolute; left: -4px; top: -1px; width: 47px; height: 36px; z-index: 2; }
.tiny { font: bold 6px "DejaVu Sans", sans-serif; text-anchor: middle; fill: #33240a; }
.tiny.light { fill: #fff; }
.tiny.red { fill: #b73535; }
.micro { font: bold 5px "DejaVu Sans", sans-serif; text-anchor: middle; fill: #111; }
.digits { font: bold 9px "DejaVu Sans Mono", monospace; text-anchor: middle; fill: #555; }
.t3d { font: bold 18px "Liberation Sans", sans-serif; fill: #8ebce4; stroke: #3f78ac; }

.workspace { flex: 1; display: flex; min-height: 0; border-top: 1px solid #fff; box-shadow: 0 -1px 0 #888; margin-top: 2px; }
.sidebar { width: 34px; display: flex; flex-direction: column; flex: none; background: #bbb; }
.vgroup {
  padding: 4px 0 6px; display: flex; flex-direction: column; align-items: center;
  background: linear-gradient(90deg, #e6e6e6, #d8d8d8 50%, #b8b8b8);
  border-bottom: 1px solid #aaa; border-radius: 0 0 4px 4px;
}
.vgroup:first-child { padding-top: 2px; }
.vgroup:last-child { flex: 1; border: 0; border-radius: 0; }
.vgroup .grip { width: 23px; height: 3px; background: repeating-linear-gradient(90deg, #0078d7 0 3px, transparent 3px 5px); }
.vgroup button { width: 31px; height: 31px; display: grid; place-items: center; flex: none; }

.canvas { flex: 1; min-width: 0; margin: 0 7px 0 16px; background: #000; border: solid #777; border-width: 1px 0 0 2px; }
.board { display: block; width: 100%; height: 100%; overflow: hidden; }
.callout { font: bold 17px "Liberation Mono", monospace; fill: #f00; }
.silk { font: 7px "Liberation Sans", sans-serif; }

.dock { width: 267px; flex: none; position: relative; border-left: 1px solid #888; font: 11px "Roboto", sans-serif; }
.dock-title { display: flex; align-items: center; height: 16px; margin-right: 29px; padding: 0 4px 0 3px; gap: 7px; background: linear-gradient(#e4e4e4, #bcbcbc); }
.dock-title .grip { height: 8px; }
.dock-title h2 { font: 12px/14px "Roboto", sans-serif; margin: 0 0 2px -3px; flex: 1; }
.dock-title button { width: 9px; height: 9px; display: grid; }
.dock-body { display: flex; justify-content: space-between; }
.finder { width: 189px; margin: 6px 0 0 8px; }
fieldset { margin: 0; border: 1px solid #d9d9d9; min-width: 0; }
legend { padding: 0 2px; line-height: 14px; }
.filter { padding: 5px 0 0 6px; }
.byname { margin-top: 6px; padding: 2px 3px 8px 6px; }
.filter .all { display: flex; gap: 13px; padding-left: 1px; }
.all button { width: 43px; height: 14px; border: 1px solid #0067c0; border-radius: 4px; background: #fdfdfd; line-height: 12px; }
.all button + button { width: 47px; }
.checks { display: grid; grid-template-columns: 84px 1fr; grid-auto-rows: 22px; margin-top: 4px; }
.checks label { display: flex; align-items: center; gap: 3px; white-space: nowrap; }
.off { color: #838383; }
input[type="checkbox"] { appearance: none; width: 13px; height: 13px; margin: 0; border: 1px solid #555; border-radius: 3px; background: #f6f6f6; display: grid; place-items: center; }
input[type="checkbox"]:disabled { border-color: #c3c3c3; background: #fbfbfb; }
input[type="checkbox"]:checked { background: #005fb8; border-color: #005fb8; }
input[type="checkbox"]:checked::before { content: ""; width: 6px; height: 3px; border: solid #fff; border-width: 0 0 1px 1px; transform: translateY(-1px) rotate(-45deg); }
.line { display: flex; gap: 5px; align-items: center; }
.pick { position: relative; width: 52px; }
.pick.grow { flex: 1; }
select { appearance: none; width: 100%; height: 21px; padding: 0 3px; border: 1px solid #d0d0d0; background: #fdfdfd; font: inherit; color: #111; border-radius: 1px; display: block; }
.pick svg { position: absolute; right: 4px; top: 8px; width: 9px; height: 6px; }
.second { margin-top: 3px; }
.expand { width: 11px; display: grid; }
.expand svg { width: 6px; height: 8px; }
input[type="text"] { flex: 1; min-width: 0; height: 20px; padding: 0 2px; border: 1px solid #888; border-right-color: #ddd; border-bottom: 2px solid #0067c0; background: #fff; font-family: inherit; font-size: 12px; color: #111; border-radius: 0; }
.btn { height: 20px; padding: 0 6px; border: 1px solid #ccc; border-radius: 4px; background: #fdfdfd; white-space: nowrap; }
.second .btn { width: 48px; margin-right: 3px; }
.query { margin: 15px 0 0 1px; width: 89px; }
.tabs { display: flex; flex-direction: column; padding-top: 5px; }
.tabs button { writing-mode: vertical-rl; width: 17px; height: 68px; padding: 4px 0; text-align: left; font: 12px "Noto Sans", sans-serif; border: 1px solid #7f9db9; border-right: 0; }
.tabs button + button { border-top: 0; }
.notes { position: absolute; left: 0; top: 0; width: 100%; height: 100%; overflow: visible; pointer-events: none; }
.credit { position: absolute; right: 15px; bottom: 7px; font: 14px "Liberation Sans", "Noto Sans CJK SC", sans-serif; color: #999; text-shadow: 1px 1px 0 #fff; }
```
